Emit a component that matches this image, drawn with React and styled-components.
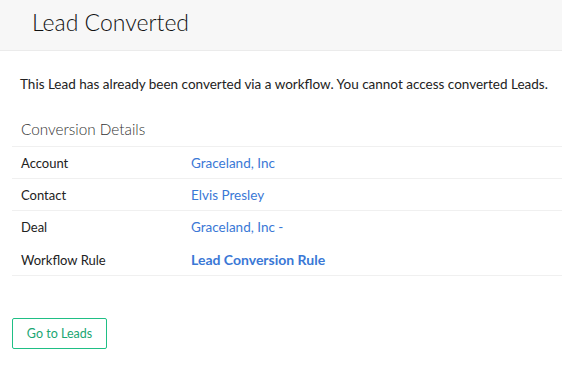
import React from "react";
import styled, { createGlobalStyle } from "styled-components";

const GlobalStyle = createGlobalStyle`
  body {
    margin: 0;
    background: #fff;
    font-family: "Lato", "Liberation Sans", sans-serif;
    color: #222;
  }
`;

const Header = styled.header`
  height: 51px;
  background: #f7f7f7;
  border-bottom: 1px solid #ebebeb;
  display: flex;
  align-items: center;
  padding: 0 0 7px 32px;
  box-sizing: border-box;
`;

const Title = styled.h1`
  margin: 0;
  font-size: 23px;
  font-weight: 300;
  color: #111;
`;

const Body = styled.div`
  padding: 25px 0 0 12px;
`;

const Notice = styled.p`
  margin: 0 0 0 8px;
  font-size: 13.5px;
  line-height: 17px;
`;

const Section = styled.section`
  margin-top: 18px;
`;

const SectionTitle = styled.h2`
  margin: 0;
  padding-left: 9px;
  height: 35px;
  display: flex;
  align-items: center;
  font-size: 15.3px;
  font-weight: 300;
  color: #333;
  border-bottom: 1px solid #f0f0f0;
`;

const Row = styled.div`
  display: flex;
  align-items: center;
  height: ${(p) => (p.$tall ? 32 : 31)}px;
  padding-left: 9px;
  font-size: 13px;
  border-bottom: 1px solid ${(p) => (p.$noLine ? "transparent" : "#f0f0f0")};
`;

const Label = styled.div`
  width: 170px;
`;

const Value = styled.a`
  color: #3a78d6;
  font-size: ${(p) => (p.$bold ? 14 : 13.5)}px;
  font-weight: ${(p) => (p.$bold ? 700 : 400)};
  text-decoration: none;
`;

const Button = styled.button`
  margin-top: 42px;
  width: 95px;
  height: 31px;
  background: #fff;
  border: 1px solid #1fbf85;
  border-radius: 2px;
  color: #1aa673;
  font-family: inherit;
  font-size: 12.5px;
  cursor: pointer;
`;

const rows = [
  { label: "Account", value: "Graceland, Inc" },
  { label: "Contact", value: "Elvis Presley" },
  { label: "Deal", value: "Graceland, Inc -", noLine: true },
  { label: "Workflow Rule", value: "Lead Conversion Rule", bold: true },
];

export default function App() {
  return (
    <>
      <GlobalStyle />
      <Header>
        <Title>Lead Converted</Title>
      </Header>
      <Body>
        <Notice>
          This Lead has already been converted via a workflow. You cannot access converted Leads.
        </Notice>
        <Section>
          <SectionTitle>Conversion Details</SectionTitle>
          {rows.map((r) => (
            <Row key={r.label} $noLine={r.noLine} $tall={r.noLine}>
              <Label>{r.label}</Label>
              <Value href="#" $bold={r.bold}>
                {r.value}
              </Value>
            </Row>
          ))}
        </Section>
        <Button>Go to Leads</Button>
      </Body>
    </>
  );
}
